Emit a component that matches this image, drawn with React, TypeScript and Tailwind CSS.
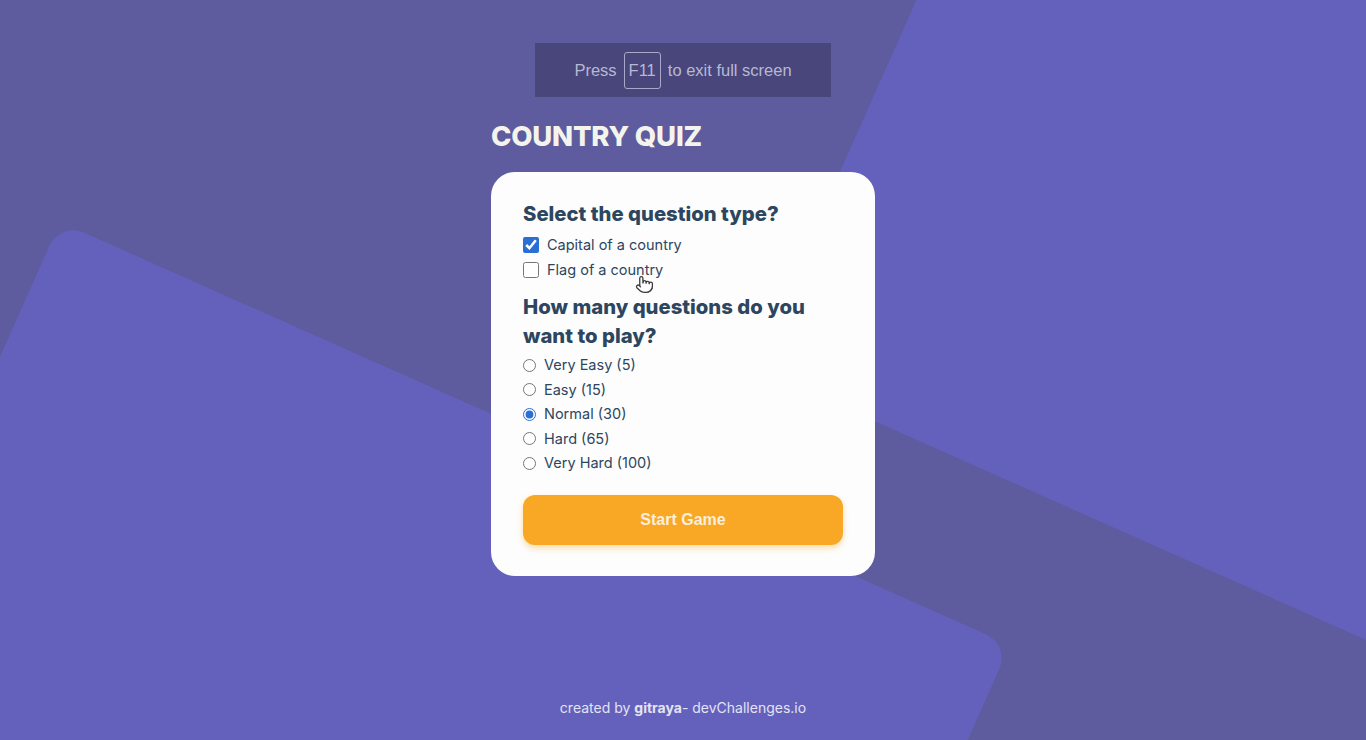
import { Pointer } from "lucide-react";

const levels = [
  { label: "Very Easy (5)", checked: false },
  { label: "Easy (15)", checked: false },
  { label: "Normal (30)", checked: true },
  { label: "Hard (65)", checked: false },
  { label: "Very Hard (100)", checked: false },
];

export default function App() {
  return (
    <div className="relative flex h-[740px] w-full flex-col items-center overflow-hidden bg-[#5e5c9e] font-['Inter',sans-serif]">

      {/* background shapes */}
      <div className="pointer-events-none absolute left-[753px] top-[-833px] h-[1200px] w-[1400px] origin-bottom-left rotate-[24deg] bg-[#6361bb]" />
      <div className="pointer-events-none absolute left-[60px] top-[222px] h-[900px] w-[1040px] origin-top-left rotate-[24deg] rounded-[26px] bg-[#6361bb]" />

      {/* fullscreen notice */}
      <div className="absolute left-1/2 top-[43px] flex h-[54px] w-[296px] -translate-x-1/2 items-center justify-center gap-[7px] bg-[#48467a] font-['Liberation_Sans',sans-serif] text-[16.5px] text-[#b9b8d4]">
        <span>Press</span>
        <span className="flex h-[37px] items-center rounded-[3px] border border-[#a9a8c8] px-[4px]">F11</span>
        <span>to exit full screen</span>
      </div>

      <main className="relative z-10 mt-[118px] w-[384px]">
        <h1 className="text-[27.5px] font-extrabold leading-[36px] tracking-[-0.2px] text-[#f4f4ec]">
          COUNTRY QUIZ
        </h1>

        <div className="relative mt-[18px] rounded-[24px] bg-[#fdfdfd] px-8 pb-[31px] pt-[28px]">
          <h2 className="text-[20.3px] font-extrabold leading-[28px] text-[#2d4660]">
            Select the question type?
          </h2>

          <div className="mt-[9px] flex flex-col gap-[9px]">
            <label className="flex items-center gap-2 text-[14.5px] leading-4 text-[#2d4660]">
              <input type="checkbox" defaultChecked className="h-4 w-4 accent-[#2a6fd4]" />
              Capital of a country
            </label>
            <label className="flex items-center gap-2 text-[14.5px] leading-4 text-[#2d4660]">
              <input type="checkbox" className="h-4 w-4" />
              Flag of a country
            </label>
          </div>

          <Pointer className="absolute left-[144px] top-[103px] h-[19px] w-[19px] fill-white text-[#3a3a3a]" strokeWidth={1.6} />

          <h2 className="mt-[14px] text-[20.3px] font-extrabold leading-[29px] text-[#2d4660]">
            How many questions do you want to play?
          </h2>

          <div className="mt-[7px] flex flex-col gap-[8px]">
            {levels.map((l) => (
              <label key={l.label} className="flex items-center gap-[8px] text-[14.5px] leading-[16.5px] text-[#2d4660]">
                <input type="radio" name="level" defaultChecked={l.checked} className="h-[13px] w-[13px] accent-[#2a6fd4]" />
                {l.label}
              </label>
            ))}
          </div>

          <button className="mt-[23px] h-[50px] w-full rounded-xl bg-[#f9a826] font-['Liberation_Sans',sans-serif] text-[16px] font-bold text-[#fbeedd] shadow-[0_3px_6px_rgba(249,168,38,0.4)]">
            Start Game
          </button>
        </div>
      </main>

      <footer className="relative z-10 mt-auto mb-[22px] text-[14px] text-[#e4e3f3]">
        created by <span className="font-bold">gitraya</span>- devChallenges.io
      </footer>
    </div>
  );
}
